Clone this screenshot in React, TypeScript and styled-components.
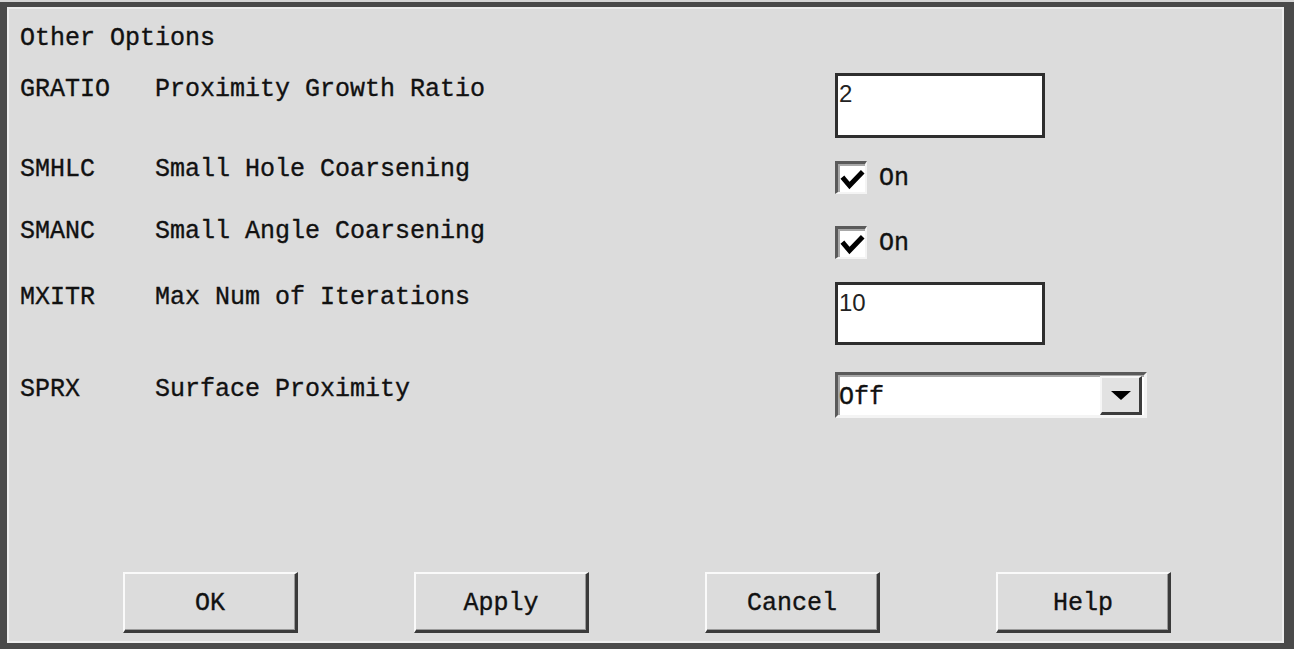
import { createGlobalStyle, styled } from "styled-components";

const GlobalStyle = createGlobalStyle`
  html, body {
    margin: 0;
    padding: 0;
    background: #d6d6d6;
  }
  body {
    font-family: "Liberation Mono", "DejaVu Sans Mono", monospace;
    color: #111;
    -webkit-text-stroke: 0.35px #111;
  }
`;

const rows = [
  { code: "GRATIO", label: "Proximity Growth Ratio", kind: "text", value: "2", h: 82, lt: 2, ct: 0, ch: 65 },
  { code: "SMHLC", label: "Small Hole Coarsening", kind: "check", value: "On", h: 62, lt: 0, ct: 5 },
  { code: "SMANC", label: "Small Angle Coarsening", kind: "check", value: "On", h: 65, lt: 0, ct: 8 },
  { code: "MXITR", label: "Max Num of Iterations", kind: "text", value: "10", h: 90, lt: 1, ct: 0, ch: 63 },
  { code: "SPRX", label: "Surface Proximity", kind: "select", value: "Off", h: 46, lt: 3, ct: 0 },
];

const buttons = ["OK", "Apply", "Cancel", "Help"];

export default function App() {
  return (
    <>
      <GlobalStyle />
      <Window>
        <Content>
          <Title>Other Options</Title>
          {rows.map((r) => (
            <Row key={r.code} $h={r.h}>
              <Label $top={r.lt}>
                <Code>{r.code}</Code>
                <span>{r.label}</span>
              </Label>
              <Control $top={r.ct}>
                {r.kind === "text" && <TextBox $h={r.ch ?? 64}>{r.value}</TextBox>}
                {r.kind === "check" && (
                  <CheckRow>
                    <CheckBox>
                      <svg width="26" height="26" viewBox="0 0 26 26">
                        <path
                          d="M5 13 L10.5 19.5 L22 7.5"
                          fill="none"
                          stroke="#000"
                          strokeWidth="5"
                          strokeLinecap="square"
                        />
                      </svg>
                    </CheckBox>
                    <span>{r.value}</span>
                  </CheckRow>
                )}
                {r.kind === "select" && (
                  <Select>
                    <SelectText>{r.value}</SelectText>
                    <ArrowButton>
                      <svg width="20" height="9" viewBox="0 0 20 9">
                        <path d="M0 0 H20 L10 9 Z" fill="#000" />
                      </svg>
                    </ArrowButton>
                  </Select>
                )}
              </Control>
            </Row>
          ))}
        </Content>
        <ButtonBar>
          {buttons.map((b) => (
            <Button key={b}>{b}</Button>
          ))}
        </ButtonBar>
      </Window>
    </>
  );
}

const Window = styled.div`
  box-sizing: border-box;
  width: 1294px;
  height: 647px;
  margin-top: 2px;
  border: 6px solid #4a4a4a;
  border-left-width: 7px;
  border-top-width: 5px;
  border-right-width: 10px;
  background: #dcdcdc;
  box-shadow: inset 2px 2px 0 #ededed, inset -2px -2px 0 #ededed;
  display: flex;
  flex-direction: column;
  font-size: 25px;
`;

const Content = styled.div`
  flex: 1;
  padding: 17px 0 0 13px;
`;

const Title = styled.div`
  line-height: 30px;
  height: 30px;
  margin-bottom: 19px;
`;

const Row = styled.div<{ $h: number }>`
  display: flex;
  align-items: flex-start;
  height: ${(p) => p.$h}px;
`;

const Label = styled.div<{ $top: number }>`
  display: flex;
  width: 815px;
  flex: none;
  line-height: 30px;
  margin-top: ${(p) => p.$top}px;
  white-space: pre;
`;

const Code = styled.span`
  width: 135px;
  flex: none;
`;

const Control = styled.div<{ $top: number }>`
  margin-top: ${(p) => p.$top}px;
`;

const TextBox = styled.div<{ $h: number }>`
  box-sizing: border-box;
  width: 210px;
  height: ${(p) => p.$h}px;
  background: #fff;
  border: 3px solid #2e2e2e;
  padding: 6px 0 0 1px;
  font-family: "Liberation Sans", Arial, sans-serif;
  font-size: 24px;
  line-height: 24px;
  color: #222;
  -webkit-text-stroke: 0;
`;

const CheckRow = styled.div`
  display: flex;
  align-items: center;
  gap: 12px;
  line-height: 30px;

  span {
    padding-top: 4px;
  }
`;

const CheckBox = styled.div`
  box-sizing: border-box;
  width: 32px;
  height: 33px;
  background: #fff;
  border-top: 3px solid #5a5a5a;
  border-left: 3px solid #5a5a5a;
  border-right: 2px solid #f4f4f4;
  border-bottom: 2px solid #f4f4f4;
  box-shadow: inset 2px 2px 0 #a8a8a8;
  display: flex;
  align-items: center;
  justify-content: center;
  padding: 3px 0 0 1px;
`;

const Select = styled.div`
  box-sizing: border-box;
  width: 312px;
  height: 46px;
  background: #fff;
  border-top: 3px solid #5a5a5a;
  border-left: 3px solid #5a5a5a;
  border-right: 3px solid #f4f4f4;
  border-bottom: 3px solid #f4f4f4;
  box-shadow: inset 2px 2px 0 #a8a8a8;
  display: flex;
  align-items: stretch;
  justify-content: space-between;
  padding: 1px 2px 0 0;
`;

const SelectText = styled.span`
  line-height: 44px;
  padding-left: 1px;
`;

const ArrowButton = styled.div`
  box-sizing: border-box;
  width: 42px;
  background: #e2e2e2;
  border-top: 2px solid #f6f6f6;
  border-left: 2px solid #f6f6f6;
  border-right: 3px solid #3c3c3c;
  border-bottom: 3px solid #3c3c3c;
  display: flex;
  align-items: center;
  justify-content: center;
`;

const ButtonBar = styled.div`
  display: flex;
  gap: 116px;
  padding: 0 0 10px 116px;
`;

const Button = styled.div`
  box-sizing: border-box;
  width: 175px;
  height: 61px;
  background: #dcdcdc;
  border-top: 2px solid #fafafa;
  border-left: 2px solid #fafafa;
  border-right: 3px solid #3a3a3a;
  border-bottom: 3px solid #3a3a3a;
  box-shadow: inset -1px -1px 0 #9a9a9a;
  display: flex;
  align-items: center;
  justify-content: center;
  padding-top: 3px;
`;
